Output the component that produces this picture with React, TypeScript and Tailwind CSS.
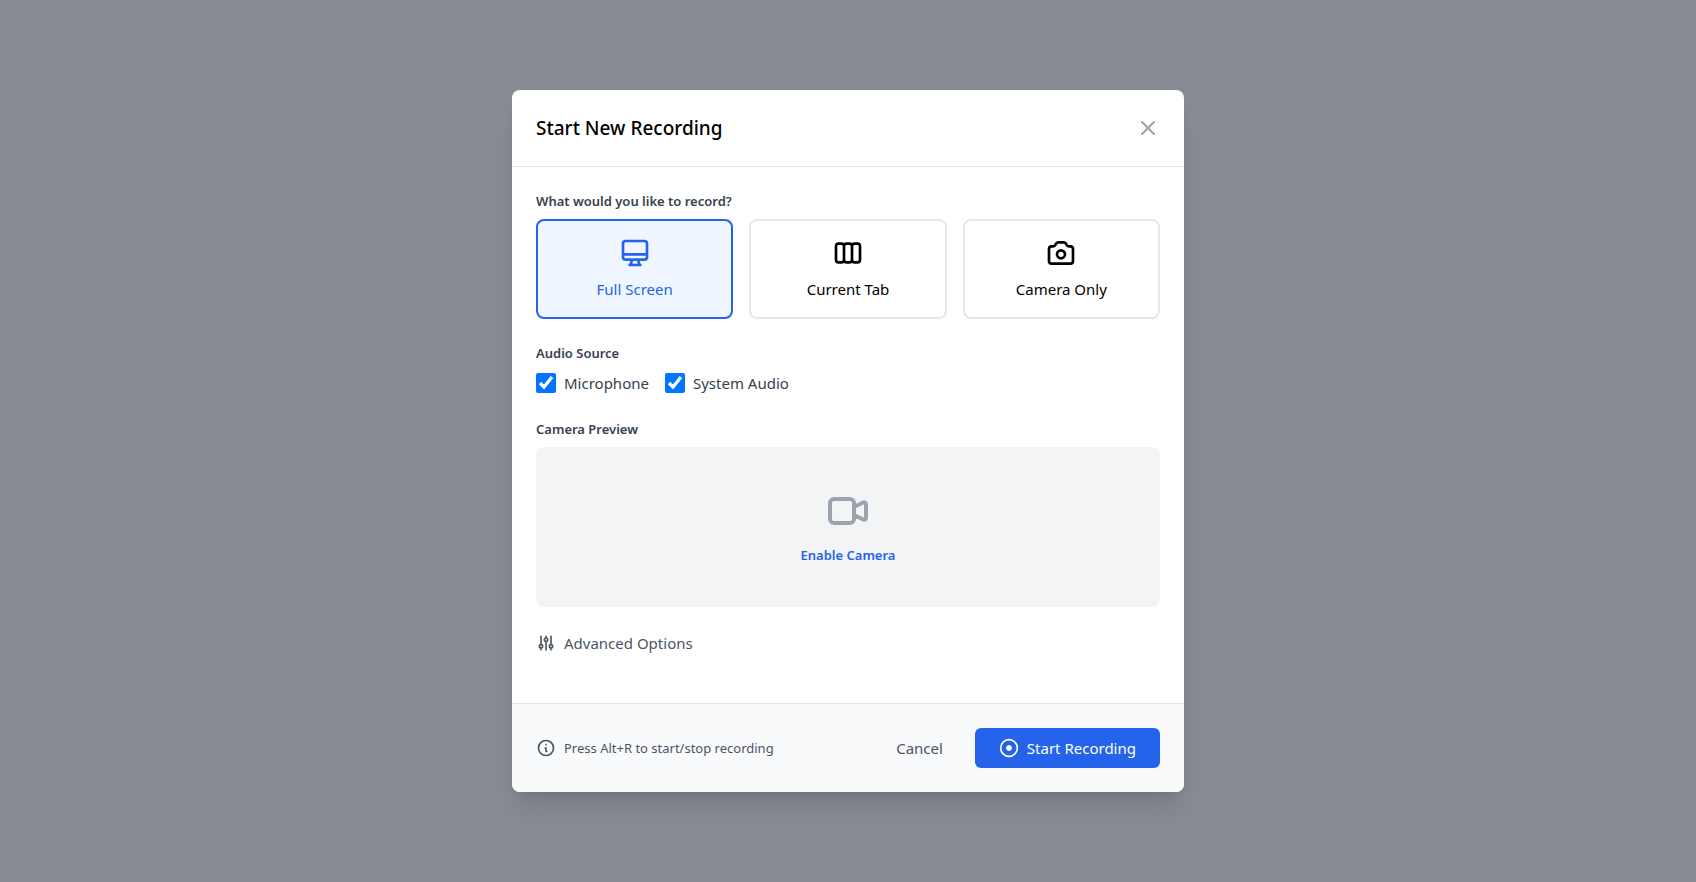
import { useState } from "react";

type IconProps = {
  d: string;
  className?: string;
};

type Mode = "screen" | "tab" | "camera";

const modes: { id: Mode; label: string; icon: string }[] = [
  {
    id: "screen",
    label: "Full Screen",
    icon: "M9.75 17L9 20l-1 1h8l-1-1-.75-3M3 13h18M5 17h14a2 2 0 002-2V5a2 2 0 00-2-2H5a2 2 0 00-2 2v10a2 2 0 002 2z"
  },
  {
    id: "tab",
    label: "Current Tab",
    icon: "M9 17V7m0 10a2 2 0 01-2 2H5a2 2 0 01-2-2V7a2 2 0 012-2h2a2 2 0 012 2m0 10a2 2 0 002 2h2a2 2 0 002-2M9 7a2 2 0 012-2h2a2 2 0 012 2m0 10V7m0 10a2 2 0 002 2h2a2 2 0 002-2V7a2 2 0 00-2-2h-2a2 2 0 00-2 2"
  },
  {
    id: "camera",
    label: "Camera Only",
    icon: "M3 9a2 2 0 012-2h.93a2 2 0 001.664-.89l.812-1.22A2 2 0 0110.07 4h3.86a2 2 0 011.664.89l.812 1.22A2 2 0 0018.07 7H19a2 2 0 012 2v9a2 2 0 01-2 2H5a2 2 0 01-2-2V9z M15 13a3 3 0 11-6 0 3 3 0 016 0z"
  }
];

function Icon({ d, className }: IconProps) {
  return (
    <svg
      className={className}
      viewBox="0 0 24 24"
      fill="none"
      stroke="currentColor"
      strokeWidth={2}
      strokeLinecap="round"
      strokeLinejoin="round"
      aria-hidden="true"
    >
      <path d={d} />
    </svg>
  );
}

export default function App() {
  const [mode, setMode] = useState<Mode>("screen");
  const [microphone, setMicrophone] = useState(true);
  const [systemAudio, setSystemAudio] = useState(true);

  return (
    <div className="flex min-h-screen items-center justify-center bg-[#888b93] font-['Noto_Sans',sans-serif] text-[15px] leading-6 text-black">
      <div
        role="dialog"
        aria-labelledby="dialog-title"
        className="w-full max-w-2xl overflow-hidden rounded-lg bg-white shadow-xl"
      >
        <header className="flex items-center justify-between border-b border-[#e5e7eb] p-6">
          <h2 id="dialog-title" className="text-[19px] leading-7 font-medium">
            Start New Recording
          </h2>
          <button type="button" aria-label="Close" className="text-[#9ca3af] hover:text-[#6b7280]">
            <Icon className="size-6" d="M6 18L18 6M6 6l12 12" />
          </button>
        </header>

        <main className="space-y-6 px-6 pt-6 pb-12">
          <section>
            <h3 className="mb-2 text-[13px] leading-5 font-semibold text-[#374151]">What would you like to record?</h3>
            <div className="grid grid-cols-3 gap-4">
              {modes.map((item) => (
                <button
                  key={item.id}
                  type="button"
                  aria-pressed={mode === item.id}
                  onClick={() => setMode(item.id)}
                  className={`flex flex-col items-center gap-2 rounded-lg border-2 p-4 ${
                    mode === item.id ? "border-[#2563eb] bg-[#eff6ff] text-[#2563eb]" : "border-[#e5e7eb]"
                  }`}
                >
                  <Icon className="size-8" d={item.icon} />
                  {item.label}
                </button>
              ))}
            </div>
          </section>

          <section>
            <h3 className="mb-2 text-[13px] leading-5 font-semibold text-[#374151]">Audio Source</h3>
            <div className="flex gap-4 text-[#374151]">
              <label className="flex items-center gap-2">
                <input
                  type="checkbox"
                  checked={microphone}
                  onChange={(e) => setMicrophone(e.target.checked)}
                  className="size-5 accent-[#0075ff]"
                />
                Microphone
              </label>
              <label className="flex items-center gap-2">
                <input
                  type="checkbox"
                  checked={systemAudio}
                  onChange={(e) => setSystemAudio(e.target.checked)}
                  className="size-5 accent-[#0075ff]"
                />
                System Audio
              </label>
            </div>
          </section>

          <section>
            <h3 className="mb-2 text-[13px] leading-5 font-semibold text-[#374151]">Camera Preview</h3>
            <div className="flex h-40 flex-col items-center justify-center gap-2 rounded-lg bg-[#f3f4f6]">
              <Icon
                className="size-12 text-[#9ca3af]"
                d="M15 10l4.553-2.276A1 1 0 0121 8.618v6.764a1 1 0 01-1.447.894L15 14M5 18h8a2 2 0 002-2V8a2 2 0 00-2-2H5a2 2 0 00-2 2v8a2 2 0 002 2z"
              />
              <button type="button" className="text-[13px] leading-6 font-semibold text-[#2563eb]">
                Enable Camera
              </button>
            </div>
          </section>

          <button type="button" className="flex items-center gap-2 text-[#4b5563]">
            <Icon
              className="size-5"
              d="M12 6V4m0 2a2 2 0 100 4m0-4a2 2 0 110 4m-6 8a2 2 0 100-4m0 4a2 2 0 110-4m0 4v2m0-6V4m6 6v10m6-2a2 2 0 100-4m0 4a2 2 0 110-4m0 4v2m0-6V4"
            />
            Advanced Options
          </button>
        </main>

        <footer className="flex items-center justify-between border-t border-[#e5e7eb] bg-[#f9fafb] p-6">
          <p className="flex items-center gap-2 text-[13px] leading-5 text-[#4b5563]">
            <Icon className="size-5" d="M13 16h-1v-4h-1m1-4h.01M21 12a9 9 0 11-18 0 9 9 0 0118 0z" />
            Press Alt+R to start/stop recording
          </p>
          <div className="flex gap-4">
            <button type="button" className="px-4 py-2 text-[#4b5563]">
              Cancel
            </button>
            <button type="button" className="flex items-center gap-2 rounded-md bg-[#2563eb] px-6 py-2 text-white">
              <svg className="size-5" viewBox="0 0 24 24" fill="none" stroke="currentColor" strokeWidth={2} aria-hidden="true">
                <circle cx="12" cy="12" r="10" />
                <circle cx="12" cy="12" r="3" fill="currentColor" strokeWidth={1} />
              </svg>
              Start Recording
            </button>
          </div>
        </footer>
      </div>
    </div>
  );
}
